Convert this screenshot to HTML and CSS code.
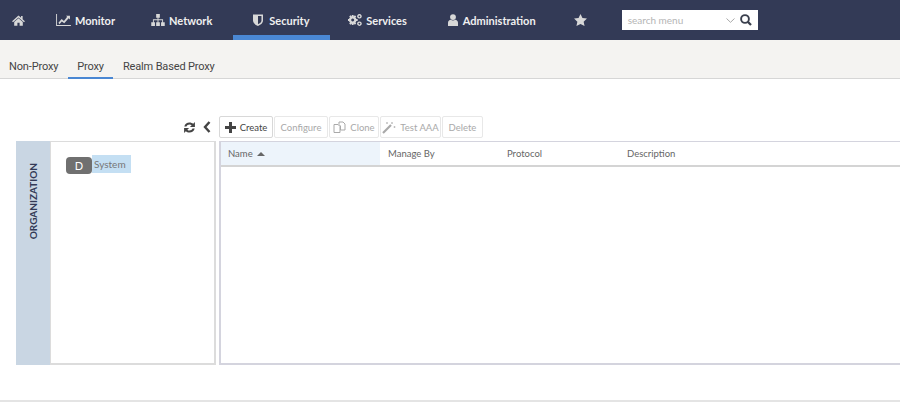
FILE: index.html
```html
<!DOCTYPE html>
<html lang="en">
<head>
    <meta charset="UTF-8">
    <title>Proxy</title>
    <link rel="stylesheet" href="styles.css">
</head>
<body>

<!-- top menu -->
<div class="topbar">
    <a class="nav-item nav-home"><svg class="nav-icon" width="13" height="11" viewBox="0 0 14 12"><path d="M7 0.5 L9.8 3 V1.2 H11.5 V4.5 L14 6.8 L13 7.8 L7 2.6 L1 7.8 L0 6.8 Z M2.3 7.6 L7 3.6 L11.7 7.6 V11.8 H8.2 V8.4 H5.8 V11.8 H2.3 Z"/></svg></a>
    <a class="nav-item nav-monitor"><svg class="nav-icon" width="15" height="12" viewBox="0 0 16 13"><path d="M0 0 H1 V12 H16 V13 H0 Z M2.5 9.5 L6 5.5 L8.5 7.5 L12 3 L10.6 1.8 H15 V6 L13.6 4.6 L8.8 10 L6.2 8 L3.6 11 Z"/></svg>Monitor</a>
    <a class="nav-item nav-network"><svg class="nav-icon" width="14" height="12" viewBox="0 0 15 13"><path d="M5.5 0 H9.5 V4 H8 V5.7 H13 V9 H14.8 V13 H10.8 V9 H12 V6.8 H8 V9 H9.5 V13 H5.5 V9 H7 V6.8 H3 V9 H4.2 V13 H0.2 V9 H2 V5.7 H7 V4 H5.5 Z"/></svg>Network</a>
    <a class="nav-item active"><svg class="nav-icon" width="10" height="12" viewBox="0 0 11 13"><path d="M0 0.5 H11 V7 C11 10 8 12 5.5 13 C3 12 0 10 0 7 Z M5.5 2 V11.2 C7.5 10.3 9.3 8.9 9.3 7 V2 Z" fill-rule="evenodd"/></svg>Security</a>
    <a class="nav-item nav-services"><svg class="nav-icon" width="14" height="12" viewBox="0 0 15 13"><path d="M5 2.4 A4.1 4.1 0 1 1 4.99 2.4 Z M5 4.9 A1.6 1.6 0 1 0 5.01 4.9 Z" fill-rule="evenodd"/><path d="M4 1 H6 V3.4 H4 Z M4 9.6 H6 V12 H4 Z M-0.4 5.5 H2 V7.5 H-0.4 Z M8 5.5 H10.4 V7.5 H8 Z M1.2 2.8 L2.6 1.4 L4 2.8 L2.6 4.2 Z M6 2.8 L7.4 1.4 L8.8 2.8 L7.4 4.2 Z M1.2 10.2 L2.6 8.8 L4 10.2 L2.6 11.6 Z M6 10.2 L7.4 8.8 L8.8 10.2 L7.4 11.6 Z"/><path d="M12.3 0 A2.5 2.5 0 1 1 12.29 0 Z M12.3 1.6 A0.9 0.9 0 1 0 12.31 1.6 Z" fill-rule="evenodd"/><path d="M12.3 8 A2.5 2.5 0 1 1 12.29 8 Z M12.3 9.6 A0.9 0.9 0 1 0 12.31 9.6 Z" fill-rule="evenodd"/></svg>Services</a>
    <a class="nav-item nav-admin"><svg class="nav-icon" width="10" height="12" viewBox="0 0 11 13"><circle cx="5.5" cy="3.3" r="3.2"/><path d="M0 13 V9.5 C0 7.5 1.5 6.4 3 6.2 C4.5 7.3 6.5 7.3 8 6.2 C9.5 6.4 11 7.5 11 9.5 V13 Z"/></svg>Administration</a>
    <a class="nav-item nav-star"><svg class="nav-icon" width="13" height="12" viewBox="0 0 14 13"><path d="M7 0 L9.1 4.4 L14 5 L10.4 8.3 L11.4 13 L7 10.7 L2.6 13 L3.6 8.3 L0 5 L4.9 4.4 Z"/></svg></a>
    <div class="nav-search">
        <span class="search-text">search menu</span>
        <svg class="search-caret" width="9" height="5" viewBox="0 0 9 5"><path d="M0.5 0.5 L4.5 4.3 L8.5 0.5" fill="none" stroke="#a8a8a8" stroke-width="1"/></svg>
        <svg width="12" height="12" viewBox="0 0 12 12"><circle cx="5" cy="5" r="3.9" fill="none" stroke="#3a3f4d" stroke-width="1.9"/><path d="M7.8 7.8 L11 11" stroke="#3a3f4d" stroke-width="2.3"/></svg>
    </div>
</div>

<!-- sub tabs -->
<div class="subtabs">
    <a class="subtab">Non-Proxy</a>
    <a class="subtab active">Proxy</a>
    <a class="subtab">Realm Based Proxy</a>
</div>

<div class="content">
    <div class="toolbar">
        <svg class="tool-refresh" width="13" height="13" viewBox="0 0 12 12"><path d="M1.2 5 C1.7 2.6 3.7 1.3 6 1.3 C7.4 1.3 8.6 1.8 9.4 2.6 L11 1 V5.6 H6.4 L8 4 C7.5 3.5 6.8 3.2 6 3.2 C4.7 3.2 3.6 3.9 3.2 5 Z M10.8 7 C10.3 9.4 8.3 10.7 6 10.7 C4.6 10.7 3.4 10.2 2.6 9.4 L1 11 V6.4 H5.6 L4 8 C4.5 8.5 5.2 8.8 6 8.8 C7.3 8.8 8.4 8.1 8.8 7 Z" fill="#444"/></svg>
        <svg class="tool-back" width="8" height="12" viewBox="0 0 8 12"><path d="M6.5 1 L2 6 L6.5 11" fill="none" stroke="#444" stroke-width="2.4"/></svg>
        <button class="tool-btn primary"><svg width="11" height="11" viewBox="0 0 11 11"><path d="M4 0 H7 V4 H11 V7 H7 V11 H4 V7 H0 V4 H4 Z" fill="#444"/></svg>Create</button>
        <button class="tool-btn btn-configure">Configure</button>
        <button class="tool-btn btn-clone"><svg width="13" height="13" viewBox="0 0 13 13"><g fill="#fff" stroke="#a9a9a9"><path d="M1 3.5 H5 L7 5.5 V11.5 H1 Z"/><path d="M6 1 H10 L12 3 V9 H7.5 V5 L6 3.5 Z"/></g></svg>Clone</button>
        <button class="tool-btn btn-test"><svg width="14" height="13" viewBox="0 0 14 13"><path d="M1 12 L9 4" stroke="#a9a9a9" stroke-width="2.2"/><path d="M10 1 V3 M9 2 H11 M12.5 5 V7 M11.5 6 H13.5 M5 1 V3 M4 2 H6" stroke="#bbb" stroke-width="0.9"/></svg>Test AAA</button>
        <button class="tool-btn btn-delete">Delete</button>
    </div>

    <div class="panels">
        <div class="org-rail"><span>ORGANIZATION</span></div>
        <div class="tree-panel">
            <div class="tree-node">
                <span class="node-badge">D</span><span class="node-label">System</span>
            </div>
        </div>
        <div class="grid-panel">
            <div class="grid-head">
                <div class="grid-col sorted">Name <i class="sort-arrow"></i></div>
                <div class="grid-col">Manage By</div>
                <div class="grid-col">Protocol</div>
                <div class="grid-col">Description</div>
            </div>
        </div>
    </div>
</div>

<div class="footer-line"></div>

</body>
</html>
```

FILE: styles.css
```css
body {
    margin: 0;
    height: 402px;
    overflow: hidden;
    background-color: #fff;
    font-family: Lato, "Noto Sans", sans-serif;
    font-size: 10px;
    color: #555;
}
/* top menu */
.topbar {
    display: flex;
    align-items: stretch;
    height: 40px;
    background-color: #333a56;
}
.nav-item {
    display: flex;
    align-items: center;
    padding: 0 20px;
    color: #f0f0f0;
    font-size: 11px;
    font-weight: 700;
}
.nav-icon {
    flex-shrink: 0;
    fill: #d8d8d8;
    margin-right: 4px;
}
.nav-home {
    width: 12px;
    padding: 0 12px;
}
.nav-home .nav-icon,
.nav-star .nav-icon {
    margin-right: 0;
}
.nav-monitor {
    padding-right: 16px;
}
.nav-network {
    padding-right: 21px;
}
.nav-item.active {
    box-sizing: border-box;
    width: 97px;
    border-bottom: 5px solid #4a87d3;
    padding-top: 5px;
    padding-bottom: 0;
}
.nav-item.active .nav-icon {
    margin-right: 6px;
}
.nav-services {
    padding-left: 18px;
}
.nav-admin {
    padding-left: 21px;
    padding-right: 19px;
}
.nav-admin .nav-icon {
    margin-right: 5px;
}
.nav-star {
    padding-left: 19px;
    padding-right: 35px;
}
.nav-search {
    display: flex;
    align-items: center;
    align-self: center;
    box-sizing: border-box;
    width: 136px;
    height: 20px;
    padding: 0 6px;
    background-color: #fff;
}
.search-text {
    flex: 1;
    color: #b5b5b5;
    font-size: 10px;
}
.search-caret {
    margin-right: 5px;
}
/* sub tabs */
.subtabs {
    display: flex;
    align-items: flex-end;
    box-sizing: border-box;
    height: 39px;
    background-color: #f4f3f1;
    border-bottom: 1px solid #d6d6d6;
}
.subtab {
    box-sizing: border-box;
    height: 20px;
    margin-bottom: -1px;
    padding: 1px 9.5px 0;
    font-family: Roboto, "Liberation Sans", sans-serif;
    font-size: 11px;
    letter-spacing: -0.15px;
    line-height: 14px;
    color: #444;
}
.subtab:first-child {
    padding-left: 9px;
}
.subtab.active {
    border-bottom: 2px solid #4a87d3;
}
/* toolbar + panels */
.content {
    padding: 37px 0 0 16px;
}
.toolbar {
    display: flex;
    align-items: center;
    height: 22px;
    margin-bottom: 3px;
    padding-left: 167px;
}
.tool-back {
    margin: 0 8px 0 7px;
}
.tool-btn {
    display: flex;
    align-items: center;
    justify-content: center;
    gap: 4px;
    box-sizing: border-box;
    height: 22px;
    margin-right: 1px;
    padding: 0;
    border: 1px solid #e8e8e8;
    border-radius: 2px;
    background-color: #fff;
    color: #a9a9a9;
    font-family: Lato, "Noto Sans", sans-serif;
    font-size: 9.5px;
}
.tool-btn.primary {
    width: 54px;
    border-color: #d8d8d8;
    color: #444;
}
.btn-configure {
    width: 54px;
}
.btn-clone {
    width: 50px;
}
.btn-test {
    width: 61px;
}
.btn-delete {
    width: 41px;
}
.panels {
    display: flex;
    height: 224px;
}
.org-rail {
    display: flex;
    align-items: flex-start;
    justify-content: center;
    box-sizing: border-box;
    width: 34px;
    padding-top: 22px;
    background-color: #c9d6e3;
}
.org-rail span {
    writing-mode: vertical-rl;
    transform: rotate(180deg);
    color: #333a56;
    font-size: 10px;
    font-weight: 700;
}
.tree-panel {
    box-sizing: border-box;
    width: 166px;
    padding: 13px 0 0 15px;
    border: 1px solid #dcdcdc;
    border-width: 1px 2px 2px 1px;
}
.tree-node {
    display: flex;
}
.node-badge {
    width: 26px;
    height: 17px;
    margin-top: 2px;
    border-radius: 4px;
    background-color: #707070;
    color: #fff;
    font-size: 11px;
    line-height: 17px;
    text-align: center;
}
.node-label {
    width: 39px;
    height: 18px;
    padding-left: 2px;
    box-sizing: border-box;
    background-color: #c4dff3;
    color: #777;
    font-size: 10px;
    line-height: 18px;
}
.grid-panel {
    flex: 1;
    margin-left: 3px;
    border: 1px solid #d4d4de;
    border-width: 1px 0 2px 2px;
}
.grid-head {
    display: flex;
    height: 25px;
    box-sizing: border-box;
    border-bottom: 2px solid #d4d4d4;
}
.grid-col {
    box-sizing: border-box;
    width: 120px;
    padding-left: 7px;
    color: #666;
    font-size: 9.5px;
    line-height: 23px;
}
.grid-col:nth-child(2) {
    padding-left: 8px;
}
.grid-col.sorted {
    width: 159px;
    padding-left: 7px;
    background-color: #edf4fb;
}
.sort-arrow {
    display: inline-block;
    margin-left: 2px;
    vertical-align: 1px;
    border-left: 4px solid transparent;
    border-right: 4px solid transparent;
    border-bottom: 4px solid #666;
}
.footer-line {
    height: 2px;
    margin-top: 35px;
    background-color: #e4e4e4;
}
```
